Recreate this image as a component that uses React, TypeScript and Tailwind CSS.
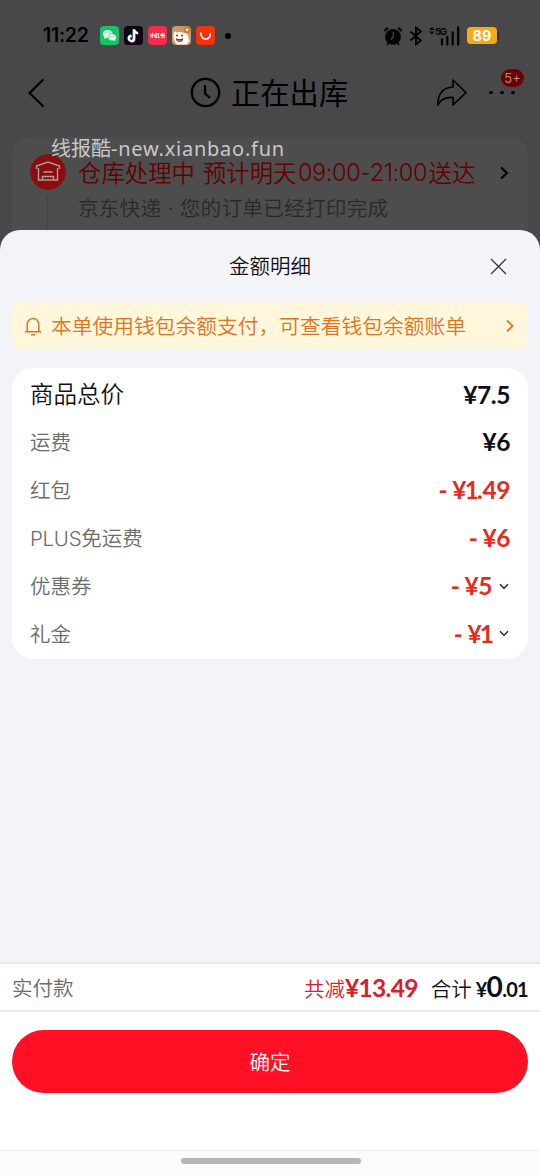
import { clsx } from 'clsx';

type Row = {
  label: string;
  amount: string;
  off?: boolean;
  expandable?: boolean;
  main?: boolean;
};

const rows: Row[] = [
  { label: '商品总价', amount: '¥7.5', main: true },
  { label: '运费', amount: '¥6' },
  { label: '红包', amount: '¥1.49', off: true },
  { label: 'PLUS免运费', amount: '¥6', off: true },
  { label: '优惠券', amount: '¥5', off: true, expandable: true },
  { label: '礼金', amount: '¥1', off: true, expandable: true },
];

function AppIcons() {
  return (
    <div className="ml-[11px] flex gap-[5px]">
      <svg width="19" height="19" viewBox="0 0 19 19">
        <rect width="19" height="19" rx="4" fill="#16c562" />
        <ellipse cx="7.6" cy="7.9" rx="4.7" ry="4" fill="#eafff2" />
        <path d="M4.5 10.5l-.4 2.4 2.6-1.4z" fill="#eafff2" />
        <ellipse cx="12.2" cy="11.3" rx="4.1" ry="3.5" fill="#fff" stroke="#16c562" strokeWidth=".7" />
        <path d="M13.5 14l1.8 1.3-.2-2.3z" fill="#fff" />
        <g fill="#16c562">
          <circle cx="6" cy="6.9" r=".65" />
          <circle cx="9.2" cy="6.9" r=".65" />
          <circle cx="10.9" cy="10.5" r=".5" />
          <circle cx="13.5" cy="10.5" r=".5" />
        </g>
      </svg>
      <svg width="19" height="19" viewBox="0 0 19 19">
        <rect width="19" height="19" rx="4" fill="#080712" />
        <g fill="none" strokeWidth="2.1">
          <path d="M9.6 3.2v9a2.6 2.6 0 1 1-2.6-2.6M9.6 3.2c.2 2.1 1.7 3.5 3.8 3.7" stroke="#3be8e4" />
          <path d="M10.6 4v9A2.6 2.6 0 1 1 8 10.4M10.6 4c.2 2.1 1.7 3.5 3.8 3.7" stroke="#f5365c" />
          <path d="M10.1 3.4v9a2.6 2.6 0 1 1-2.6-2.6M10.1 3.4c.2 2.1 1.7 3.5 3.8 3.7" stroke="#fff" />
        </g>
      </svg>
      <div className="flex size-[19px] items-center justify-center rounded-[4px] bg-[#f22c4a]">
        <span className="text-[5px] leading-none font-black whitespace-nowrap text-white">小红书</span>
      </div>
      <svg width="19" height="19" viewBox="0 0 19 19">
        <rect width="19" height="19" rx="4" fill="#c99a70" />
        <path d="M1.5 8C2 5.2 3.4 5 4.5 6.6c2-.9 4.7-.9 6.6.2 2.6-.7 4.3.9 5.4 4.2l1 4.5-3 3H5C2.5 16.5 1 12.5 1.5 8z" fill="#fff8ec" />
        <path d="M4 12.2c2 1.3 4.8 1.3 7.2.1 0 2.3-1.5 3.7-3.7 3.7S4 14.6 4 12.2z" fill="#4a3026" />
        <path d="M5 14.3c1.5.6 3.2.6 4.8-.1-1 1.4-3.5 1.7-4.8.1z" fill="#fff" />
        <circle cx="5" cy="9.4" r=".9" fill="#33231e" />
        <circle cx="10" cy="9.6" r=".9" fill="#33231e" />
        <circle cx="15" cy="3.8" r="3.5" fill="#d9722c" />
        <circle cx="15" cy="3.8" r="1.5" fill="#ffe7a6" />
      </svg>
      <svg width="19" height="19" viewBox="0 0 19 19">
        <rect width="19" height="19" rx="4" fill="#f4330c" />
        <path d="M4.8 7.6c.5 3.7 2.4 5.4 4.9 5.4s4.3-1.7 4.7-5.2" fill="none" stroke="#fff" strokeWidth="1.6" strokeLinecap="round" />
        <circle cx="4.8" cy="7.5" r="1.1" fill="#fff" />
      </svg>
    </div>
  );
}

function StatusBar() {
  return (
    <div className="flex h-[71px] items-center pl-[43px] font-[Inter,'Noto_Sans_CJK_SC',sans-serif]">
      <span className="w-[46px] text-[19.5px] font-semibold tracking-[-0.3px] whitespace-nowrap">11:22</span>
      <AppIcons />
      <span className="ml-[10px] size-1.5 rounded-full bg-black" />
      <div className="mr-[41px] ml-auto flex items-center">
        <svg width="20" height="20" viewBox="0 0 20 20">
          <circle cx="10" cy="10.8" r="7.9" fill="#050505" />
          <path d="M1.5 5.2A11 11 0 0 1 5 1.9M18.5 5.2A11 11 0 0 0 15 1.9" stroke="#050505" strokeWidth="2.2" fill="none" />
          <path d="M5.5 17L4 19M14.5 17l1.5 2" stroke="#050505" strokeWidth="1.8" />
          <path d="M10.2 6v5l-2.4 2.5" stroke="#48484a" strokeWidth="1.2" fill="none" />
        </svg>
        <svg className="ml-[6px]" width="14" height="20" viewBox="0 0 14 20">
          <path d="M1.5 5.5l10.3 9L7 18.3V1.7l4.8 3.8-10.3 9" fill="none" stroke="#050505" strokeWidth="2" />
        </svg>
        <svg className="ml-[6px]" width="32" height="20" viewBox="0 0 32 20">
          <path d="M0 4l2.9-3 2.9 3zM0 5.5l2.9 3 2.9-3z" fill="#050505" />
          <text x="6" y="8.5" fontSize="9.5" fontWeight="700" fill="#050505" textLength="12">5G</text>
          <path d="M13 13.5v5M18.3 11v7.5M23.7 6.5v12M29.2 1.5v17" stroke="#050505" strokeWidth="2.3" strokeLinecap="round" />
        </svg>
        <div className="ml-[6px] flex h-[17px] w-[30px] items-center justify-center rounded-[4px] bg-[#f6ab13] text-[14.5px] font-bold text-white">
          89
        </div>
        <span className="h-2 w-[2px] rounded-r bg-[#2a2418]" />
      </div>
    </div>
  );
}

function NavBar() {
  return (
    <div className="flex h-[66px] items-center pb-[23px]">
      <svg className="ml-[27px]" width="20" height="30" viewBox="0 0 20 30" fill="none" stroke="#000" strokeWidth="2.2">
        <path d="M16.5 1.5L2.5 15l14 13.5" />
      </svg>
      <svg className="ml-[143px]" width="31" height="31" viewBox="0 0 31 31" fill="none" stroke="#000" strokeWidth="2.3">
        <circle cx="15.5" cy="15.5" r="13.7" />
        <path d="M15 8v8.5l5 4.5" />
      </svg>
      <h1 className="mb-[2px] ml-[10px] text-[29.3px] leading-none whitespace-nowrap">正在出库</h1>
      <svg className="ml-auto" width="32" height="30" viewBox="0 0 32 30" fill="none" stroke="#000" strokeWidth="1.7" strokeLinejoin="round">
        <path d="M17 2l13 12.5L17 27v-7.5C9 19 4.5 21.5 1.8 27 1.8 16 7 9.5 17 9z" />
      </svg>
      <div className="relative mr-[24px] ml-[20px] flex w-[28px] gap-[7.5px] pl-px">
        <span className="size-[3.5px] shrink-0 rounded-full bg-black" />
        <span className="size-[3.5px] shrink-0 rounded-full bg-black" />
        <span className="size-[3.5px] shrink-0 rounded-full bg-black" />
        <span className="absolute -top-[22px] left-[13px] flex h-[18px] w-[23px] items-center justify-center rounded-full bg-[#6b0000] font-[Inter,sans-serif] text-[13px] leading-[18px] text-[#aa8d8d]">
          5+
        </span>
      </div>
    </div>
  );
}

function OrderCard() {
  return (
    <div className="relative mx-3 flex h-[93px] rounded-t-[18px] bg-[#4d4d4d]">
      <div className="flex w-[66px] flex-col items-center pl-[5px]">
        <svg className="mt-[17px] shrink-0" width="36" height="36" viewBox="0 0 36 36">
          <circle cx="18" cy="18" r="17.8" fill="#8c0d10" />
          <g fill="none" stroke="#b19b9b" strokeWidth="1.4">
            <path d="M6.5 15v-3L18 8l11.5 4v3" />
            <path d="M8.5 14v12H12M27.5 14v12H24M13.5 18h9M12.5 22.5V26h11v-3.5z" />
          </g>
        </svg>
        <span className="mt-[6px] w-px grow bg-[#434343]" />
      </div>
      <div className="pt-[23px]">
        <div className="flex h-[26px] items-center text-[23.4px] font-[350] whitespace-nowrap text-[#650000]">
          <span>仓库处理中</span>
          <span className="ml-[8px]">预计明天</span>
          <span className="w-[132px] text-center font-[Inter,sans-serif] text-[23.5px] tracking-[-0.4px]">09:00-21:00</span>
          <span>送达</span>
        </div>
        <p className="mt-[10px] font-[Inter,'Noto_Sans_CJK_SC',sans-serif] text-[20.6px] leading-[26px] font-[350] tracking-[0.28px] whitespace-nowrap text-[#292929]">
          京东快递 · 您的订单已经打印完成
        </p>
      </div>
      <svg className="mt-[29px] mr-[19px] ml-auto" width="10" height="14" viewBox="0 0 10 14" fill="none" stroke="#000" strokeWidth="2">
        <path d="M2 1.5L8 7l-6 5.500" />
      </svg>
      <span className="absolute top-[-1px] left-[39px] font-['Noto_Sans','Noto_Sans_CJK_SC',sans-serif] text-[20px] leading-[26px] whitespace-nowrap text-[#c8c8c8]">
        线报酷<span className="tracking-[0.75px]">-new.xianbao.fun</span>
      </span>
    </div>
  );
}

function Amount({ value }: { value: string }) {
  // the digit 1 sits tighter than the tabular figures around it
  return value.split('').map((ch, i) => (
    <span key={i} className={ch === '1' ? '-mx-[1.5px]' : undefined}>{ch}</span>
  ));
}

function AmountRow({ label, amount, off, expandable, main }: Row) {
  return (
    <div className="flex h-[47.8px] items-center justify-between">
      <span
        className={clsx(
          "font-[Inter,'Noto_Sans_CJK_SC',sans-serif] font-[350] whitespace-nowrap",
          main ? 'pt-[2px] text-[23.5px] text-[#111]' : 'pt-[4px] text-[20.5px] text-[#6b6b6b]',
        )}
      >
        {label.startsWith('PLUS') ? <><span className="tracking-[-0.3px]">PLUS</span>{label.slice(4)}</> : label}
      </span>
      <span
        className={clsx(
          "flex items-center pt-[2px] font-[Lato,'Noto_Sans_CJK_SC',sans-serif] text-[24.5px] font-bold tracking-[-0.4px]",
          off ? 'text-[#e42b1c]' : 'text-[#0d0d1b]',
        )}
      >
        {off && <span className="mr-[5px]">-</span>}
        <Amount value={amount} />
        {expandable && (
          <svg className="mr-px ml-[7px]" width="10" height="7" viewBox="0 0 10 7" fill="none" stroke="#222" strokeWidth="1.4">
            <path d="M1 1.2l4 4 4-4" />
          </svg>
        )}
      </span>
    </div>
  );
}

export default function App() {
  return (
    <div className="h-[1176px] w-[540px] overflow-hidden bg-[#48484a] font-['Noto_Sans_CJK_SC',sans-serif] text-black">
      <StatusBar />
      <NavBar />
      <OrderCard />

      <div className="flex h-[946px] flex-col rounded-t-[20px] bg-[#f3f4f8]">
        <div className="grid h-[72px] grid-cols-[1fr_auto_1fr] items-center">
          <h2 className="col-start-2 mb-px text-[20.5px] font-[350] text-[#111]">金额明细</h2>
          <svg className="mr-[33px] justify-self-end" width="17" height="17" viewBox="0 0 17 17" stroke="#333" strokeWidth="1.3">
            <path d="M1 1l15 15M16 1L1 16" />
          </svg>
        </div>

        <div className="mx-3 flex h-[48px] items-center rounded-[10px] bg-[#fff7dc] pl-[12px] text-[#e07420]">
          <svg width="18" height="20" viewBox="0 0 18 20" fill="none" stroke="currentColor" strokeWidth="1.5">
            <path d="M3.2 15.500V8.300a5.800 5.800 0 0 1 11.600 0v7.200M1 15.700h16M7 18.700h4" />
          </svg>
          <span className="ml-[9px] text-[20.75px] font-[350] whitespace-nowrap">本单使用钱包余额支付，可查看钱包余额账单</span>
          <svg className="mr-[13px] ml-auto" width="10" height="14" viewBox="0 0 10 14" fill="none" stroke="currentColor" strokeWidth="1.9">
            <path d="M2 1.5L7.5 7 2 12.5" />
          </svg>
        </div>

        <div className="mx-3 mt-[18px] h-[291px] rounded-[22px] bg-white px-[18px] pt-[2px]">
          {rows.map((row) => (
            <AmountRow key={row.label} {...row} />
          ))}
        </div>

        <div className="mt-auto flex h-[50px] items-center border-y-2 border-[#e9e9eb] bg-white px-3">
          <span className="text-[20.5px] font-[350] text-[#6b6b6b]">实付款</span>
          <div className="mb-[2px] ml-auto flex items-baseline whitespace-nowrap">
            <span className="text-[20.5px] font-[350] text-[#d8202b]">共减</span>
            <span className="font-[Lato,sans-serif] text-[24.5px] font-bold tracking-[-0.7px] text-[#d8202b]">¥13.49</span>
            <span className="ml-[13px] text-[20.5px] font-[350] text-[#111]">合计</span>
            <span className="ml-[4px] font-[Lato,sans-serif] text-[20px] font-bold tracking-[-0.7px] text-[#0d0d1b]">
              ¥<span className="text-[28px]">0</span>.01
            </span>
          </div>
        </div>

        <div className="h-[138px] bg-white px-3 pt-[18px]">
          <button className="h-[63px] w-full rounded-full bg-[#ff1025] text-[20.5px] font-[350] text-white">确定</button>
        </div>
        <div className="h-[26px] border-t border-[#f1f1f4] bg-[#fafbfd] pt-[7px] pl-[181px]">
          <div className="h-[6px] w-[180px] rounded-full bg-[#b5b6b8]" />
        </div>
      </div>
    </div>
  );
}
